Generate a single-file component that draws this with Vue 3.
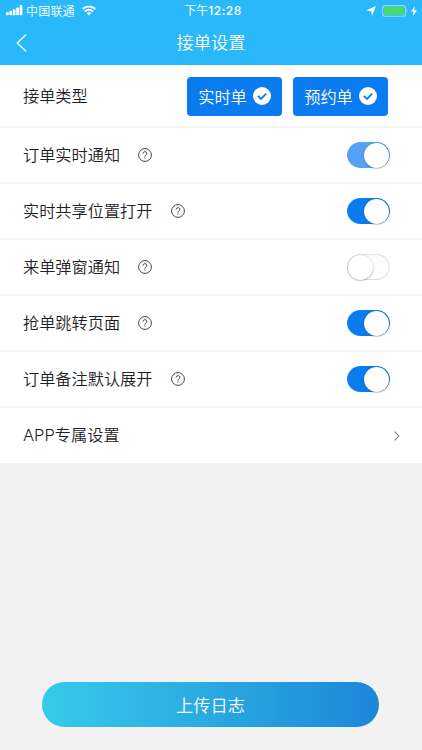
<template>
  <div class="page">
    <header class="header">
      <div class="status-bar">
        <div class="status-left">
          <svg class="signal" width="17" height="11" viewBox="0 0 17 11" fill="#fff">
            <rect x="0" y="7" width="2.7" height="3.2" rx="0.8" />
            <rect x="3.4" y="5.8" width="2.7" height="4.4" rx="0.8" />
            <rect x="6.8" y="4.2" width="2.7" height="6" rx="0.8" />
            <rect x="10.2" y="2.4" width="2.7" height="7.8" rx="0.8" />
            <rect x="13.6" y="0" width="2.8" height="10.2" rx="0.8" />
          </svg>
          <span class="carrier">中国联通</span>
          <svg class="wifi" width="14" height="11" viewBox="0 0 14 11" fill="none" stroke="#fff">
            <path d="M0.7 4 A8.9 8.9 0 0 1 13.3 4" stroke-width="2" />
            <path d="M3 6.5 A5.6 5.6 0 0 1 11 6.5" stroke-width="1.9" />
            <path d="M7 10.6 L4.8 8.3 A3 3 0 0 1 9.2 8.3 Z" fill="#fff" stroke="none" />
          </svg>
        </div>
        <div class="clock">下午<b>12:28</b></div>
        <div class="status-right">
          <svg width="10" height="10" viewBox="0 0 10 10" fill="#fff">
            <path d="M9.9 0 L6 9.9 L5 5.1 L0 4.5 Z" />
          </svg>
          <svg class="battery" width="27" height="12" viewBox="0 0 27 12">
            <rect x="0.6" y="0.6" width="23" height="10.6" rx="2.8" fill="none" stroke="#8fdcff" stroke-width="1.1" />
            <rect x="2" y="2" width="20.2" height="7.8" rx="1.4" fill="#4cd964" />
            <path d="M24.8 4 Q26.4 5.9 24.8 7.8 Z" fill="#8fdcff" />
          </svg>
          <svg class="bolt" width="6" height="10" viewBox="0 0 6 10" fill="#fff">
            <path d="M3.9 0 L0 5.5 H2.6 L1.8 10 L6 4.2 H3.3 Z" />
          </svg>
        </div>
      </div>
      <div class="nav-bar">
        <svg class="back" width="12" height="18" viewBox="0 0 12 18" fill="none" stroke="#fff" stroke-width="1.3">
          <path d="M10 0.8 L1.2 9 L10 17.2" />
        </svg>
        <h1 class="title">接单设置</h1>
      </div>
    </header>

    <main class="list">
      <div class="row row--type">
        <span class="label">接单类型</span>
        <div class="types">
          <button v-for="type in orderTypes" :key="type" class="type-btn">
            <span class="type-text">{{ type }}</span>
            <svg width="18" height="18" viewBox="0 0 18 18">
              <circle cx="9" cy="9" r="9" fill="#fff" />
              <path d="M4.8 8.8 L8 12 L13.2 6.7" fill="none" stroke="#0b7bf0" stroke-width="1.8" />
            </svg>
          </button>
        </div>
      </div>

      <div v-for="item in settings" :key="item.key" class="row">
        <span class="label">{{ item.label }}</span>
        <svg class="help" width="14" height="14" viewBox="0 0 14 14" fill="none" stroke="#2f2f36">
          <circle cx="7" cy="7" r="6.4" stroke-width="0.9" />
          <path d="M5.1 5.6 C5.1 3.1 8.9 3.1 8.9 5.4 C8.9 6.8 7 6.8 7 8.5" stroke-width="0.95" />
          <path d="M7 9.5 V10.6" stroke-width="1.1" />
        </svg>
        <span
          :class="['switch', { 'switch--on': item.on, 'switch--faded': item.faded }]"
          @click="item.on = !item.on"
        >
          <i class="knob"></i>
        </span>
      </div>

      <div class="row row--link">
        <span class="label"><span class="latin">APP</span>专属设置</span>
        <svg class="arrow" width="6" height="10" viewBox="0 0 6 10" fill="none" stroke="#77777c" stroke-width="1.1">
          <path d="M0.7 0.6 L4.8 5 L0.7 9.4" />
        </svg>
      </div>
    </main>

    <footer class="footer">
      <button class="upload">上传日志</button>
    </footer>
  </div>
</template>

<script setup>
import { ref } from 'vue'

const orderTypes = ['实时单', '预约单']

const settings = ref([
  { key: 'notice', label: '订单实时通知', on: true, faded: true },
  { key: 'location', label: '实时共享位置打开', on: true },
  { key: 'popup', label: '来单弹窗通知', on: false },
  { key: 'jump', label: '抢单跳转页面', on: true },
  { key: 'remark', label: '订单备注默认展开', on: true },
])
</script>

<style>
body {
  margin: 0;
}
</style>

<style scoped>
.page {
  display: flex;
  flex-direction: column;
  height: 750px;
  overflow: hidden;
  background: #f2f2f2;
  color: #1f1f2b;
  font-family: 'Noto Sans CJK SC', sans-serif;
  font-weight: 350;
}

button {
  padding: 0;
  border: none;
  font-family: inherit;
  font-weight: inherit;
  color: #fff;
}

svg {
  display: block;
  flex: none;
}

.header {
  height: 65px;
  background: #29b8f9;
  color: #fff;
}

.status-bar {
  display: grid;
  grid-template-columns: 1fr auto 1fr;
  align-items: center;
  height: 21px;
  padding: 0 5px 0 6px;
  font-size: 12px;
  line-height: 20px;
}

.status-left,
.status-right {
  display: flex;
  align-items: center;
}

.status-right {
  justify-content: flex-end;
}

.signal {
  margin-right: 3px;
}

.carrier {
  letter-spacing: 0.2px;
}

.wifi {
  margin-left: 7px;
}

.clock {
  padding-left: 3px;
}

.clock b {
  font-family: Inter, sans-serif;
  font-weight: 500;
  letter-spacing: 0.5px;
}

.battery {
  margin-left: 6px;
}

.bolt {
  margin-left: 2px;
}

.nav-bar {
  display: grid;
  grid-template-columns: 60px 1fr 60px;
  align-items: center;
  height: 44px;
}

.back {
  margin-left: 16px;
}

.title {
  margin: 0;
  padding-bottom: 2px;
  text-align: center;
  font-size: 17.2px;
  font-weight: inherit;
  line-height: 42px;
}

.list {
  padding-top: 1px;
  background: #fff;
}

.row {
  display: flex;
  align-items: center;
  box-sizing: border-box;
  height: 56px;
  padding: 0 32px 0 23px;
  border-bottom: 2px solid #f4f4f4;
}

.row--type {
  height: 62px;
  padding-right: 34px;
}

.row--link {
  height: 55px;
  padding-right: 22px;
  border-bottom: none;
}

.label {
  padding-bottom: 2px;
  font-size: 16.2px;
  line-height: 24px;
}

.latin {
  font-family: Inter, sans-serif;
  font-weight: 300;
  font-size: 16.5px;
}

.types {
  display: flex;
  gap: 11px;
  margin-left: auto;
}

.type-btn {
  display: flex;
  align-items: center;
  justify-content: center;
  gap: 6px;
  width: 95px;
  height: 39px;
  border-radius: 4px;
  background: #0b7bf0;
  font-size: 16.2px;
}

.type-text {
  padding-bottom: 1px;
}

.help {
  margin-left: 18px;
}

.switch {
  box-sizing: border-box;
  width: 43px;
  height: 26px;
  margin-left: auto;
  border: 1px solid #dedede;
  border-radius: 13px;
  background: #fcfcfc;
}

.knob {
  display: block;
  width: 25px;
  height: 25px;
  margin-top: -0.5px;
  border-radius: 50%;
  background: #fff;
  box-shadow: 0 0.5px 2px rgba(0, 0, 0, 0.4);
}

.switch--on {
  border-color: #0b7bf0;
  background: #0b7bf0;
}

.switch--on .knob {
  margin-left: 16px;
}

.switch--faded {
  border-color: #54a2f5;
  background: #54a2f5;
}

.arrow {
  margin-left: auto;
}

.footer {
  margin-top: auto;
  padding: 0 43px 23px 42px;
}

.upload {
  display: block;
  width: 100%;
  height: 45px;
  border-radius: 23px;
  background: linear-gradient(90deg, #36cbea, #1d87d9);
  font-size: 17.2px;
}
</style>
